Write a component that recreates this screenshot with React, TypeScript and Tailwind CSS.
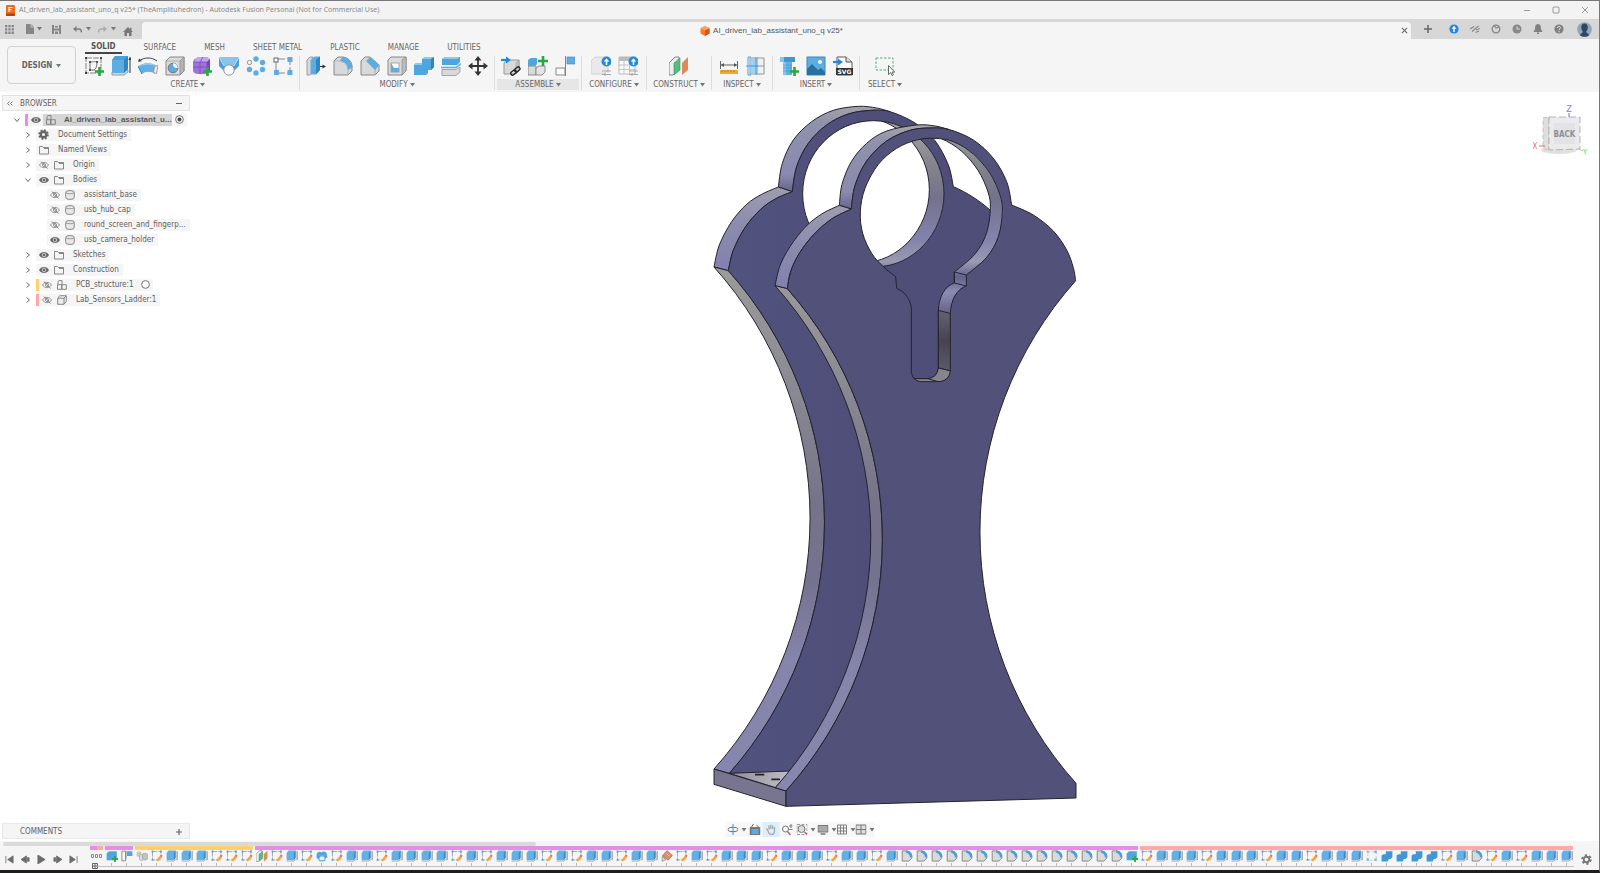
import type { ReactNode } from "react";

type Pt = [number, number];

/* ---------- shared bits ---------- */

const Caret = () => (
  <svg width="5" height="4" viewBox="0 0 5 4" className="shrink-0" aria-hidden="true">
    <path d="M0 0h5L2.5 3.5z" fill="#777" />
  </svg>
);

const Ico = ({ children, className = "size-5" }: { children: ReactNode; className?: string }) => (
  <svg viewBox="0 0 20 20" className={`${className} shrink-0`} fill="none" aria-hidden="true">
    {children}
  </svg>
);

const GreenPlus = () => <path d="M15.500 11v9M11 15.500h9" stroke="#27a844" strokeWidth="2.600" />;

/* ---------- ribbon icons ---------- */

const SketchIcon = () => (
  <Ico>
    <rect x="2" y="2" width="15" height="15" stroke="#777" strokeWidth=".9" strokeDasharray="6 1" />
    <path d="M1 1h2v2H1zM16 1h2v2h-2zM1 16h2v2H1z" fill="#444" />
    <path d="M6 13V7M6 14h5M6 6c3 0 7-1 7 0 0 4-1 7-3 8" stroke="#666" strokeWidth=".9" />
    <path d="M5 5h2v2H5zM12 5h2v2h-2zM5 13h2v2H5z" fill="#555" />
    <GreenPlus />
  </Ico>
);
const ExtrudeIcon = () => (
  <Ico>
    <path d="M1 16v3h12l4-3v-2z" fill="#d9d9d9" stroke="#888" strokeWidth=".8" />
    <path d="M1 4l3-4h13v13l-4 4H1z" fill="#5dade2" />
    <path d="M1 4l3-4h13l-4 4z" fill="#4b9fd8" />
    <path d="M13 4l4-4v13l-4 4z" fill="#2f86c3" />
    <path d="M19 17V3" stroke="#333" strokeWidth="1" />
    <path d="M17.400 4L19 .5 20.600 4z" fill="#333" />
  </Ico>
);
const RevolveIcon = () => (
  <Ico>
    <path d="M1 5c5-4 13-4 18 0" stroke="#444" />
    <path d="M0 6l1-3.500L4 5z" fill="#444" />
    <path d="M0 11c4-5 15-5 20 0l-3 7c-3-3-10-3-13 0z" fill="#62b0e4" />
    <path d="M0 11c4-5 15-5 20 0-5-3-15-3-20 0z" fill="#93ccf0" />
    <path d="M20 9.500l-1.500 8-3-1 1-6z" fill="#eee" stroke="#888" strokeWidth=".7" />
    <path d="M0 10l4 8" stroke="#2f86c3" />
  </Ico>
);
const HoleIcon = () => (
  <Ico>
    <path d="M1 5l4-4h14v14l-4 4H1z" fill="#dcdcdc" stroke="#888" />
    <path d="M15 5l4-4v14l-4 4z" fill="#b5b5b5" stroke="#888" strokeWidth=".7" />
    <path d="M1 5h14" stroke="#999" strokeWidth=".6" />
    <circle cx="8" cy="12" r="4.800" fill="#5dade2" stroke="#777" />
    <path d="M8 7.200a4.800 4.800 0 0 1 4.800 4.800c-4 0-5-2-4.800-4.800z" fill="#f5f5f5" />
  </Ico>
);
const FormIcon = () => (
  <Ico>
    <path d="M1 6c1-4 5-5 9-5s8 0 8 4v8c-1 5-4 5-9 5-7 0-8-1-8-5z" fill="#a070dc" />
    <path d="M4 2.500c4-2 13-2 13.500 1L15 6H2z" fill="#c3a3f0" />
    <path d="M15 6l3-3v11l-3 3z" fill="#7344b4" />
    <path d="M1.500 11h13.500l3-3M8 6v12M8 6l3-5M1.500 6H15v11" stroke="#7a4cb8" strokeWidth=".8" />
    <GreenPlus />
  </Ico>
);
const LoftIcon = () => (
  <Ico>
    <path d="M0 1h20v9l-6 6H6L0 10z" fill="#4b9fd8" />
    <path d="M0 1h20l-5 9H5z" fill="#86c5ee" />
    <path d="M0 1l5 9M20 1l-5 9" stroke="#e5f2fb" strokeWidth=".7" />
    <circle cx="10" cy="14" r="5.200" fill="#fafafa" stroke="#999" />
  </Ico>
);
const CircPatternIcon = () => (
  <Ico>
    <g fill="#5dade2">
      <circle cx="10" cy="3" r="2.700" />
      <circle cx="16.500" cy="6.500" r="2.700" />
      <circle cx="16.500" cy="13.500" r="2.700" />
      <circle cx="10" cy="17" r="2.700" />
      <circle cx="3.500" cy="13.500" r="2.700" />
    </g>
    <circle cx="3.500" cy="6.500" r="2.200" fill="#f5f5f5" stroke="#888" strokeWidth=".9" />
  </Ico>
);
const RectPatternIcon = () => (
  <Ico>
    <path d="M3 3h14v14H3z" stroke="#888" strokeDasharray="9 2" />
    <rect x="1" y="2" width="4" height="4" fill="#fff" stroke="#666" />
    <path d="M14.500 1h5v5h-5zM14.500 14h5v5h-5zM1 14h5v5H1z" fill="#5dade2" />
  </Ico>
);
const PressPullIcon = () => (
  <Ico>
    <path d="M1 4l3-3h3v15l-3 3H1z" fill="#d9d9d9" stroke="#888" strokeWidth=".8" />
    <path d="M4.500 4l4-3.500H14V14l-4 4.500H4.500z" fill="#5dade2" />
    <path d="M10 4l4-3.500V14l-4 4.500z" fill="#2f86c3" />
    <path d="M14 10.500h4" stroke="#333" />
    <path d="M16.500 8.500l3.500 2-3.500 2z" fill="#333" />
  </Ico>
);
const FilletIcon = () => (
  <Ico>
    <path d="M1 5l4-4h5c6 1 9 5 9 10v4l-4 4H1z" fill="#d9d9d9" stroke="#888" />
    <path d="M1 5h5c6 1 8.500 4 9 9v5" stroke="#aaa" strokeWidth=".7" />
    <path d="M9 1c6 0 10.500 4.500 10.500 10.500L15 14c0-5-3-8.500-8-9z" fill="#5dade2" />
  </Ico>
);
const ChamferIcon = () => (
  <Ico>
    <path d="M1 5l4-4h5l9 8v6l-4 4H1z" fill="#d9d9d9" stroke="#888" />
    <path d="M15 13v6" stroke="#999" strokeWidth=".7" />
    <path d="M10.500 1L19.500 9 15 14 6 5z" fill="#5dade2" />
  </Ico>
);
const ShellIcon = () => (
  <Ico>
    <path d="M1 4l3-3h15v14l-4 4H1z" fill="#dcdcdc" stroke="#888" />
    <path d="M15 4l4-3v14l-4 4z" fill="#bdbdbd" stroke="#888" strokeWidth=".7" />
    <rect x="4" y="7" width="8" height="9" fill="#fff" stroke="#888" strokeWidth=".7" />
    <path d="M4 16V7l3 5h5v4z" fill="#5dade2" />
  </Ico>
);
const CombineIcon = () => (
  <Ico>
    <path d="M8 3l3-2h9v10l-3 3h-3v3l-2 2H0V9l2-2h6z" fill="#4fa5dd" />
    <path d="M8 3l3-2h9l-3 2zM0 9l2-2h6v2z" fill="#8ecaf0" />
    <path d="M17 3l3-2v10l-3 3z" fill="#2f86c3" />
  </Ico>
);
const SplitIcon = () => (
  <Ico>
    <path d="M1 3l3-2h15v5l-3 3H1z" fill="#4fa5dd" />
    <path d="M1 3l3-2h15l-3 2z" fill="#8ecaf0" />
    <path d="M0 11.500h15l5-4" stroke="#5dade2" strokeWidth="1.500" />
    <path d="M1 13.500h14l4-2.500v5l-4 3.500H1z" fill="#d9d9d9" stroke="#888" strokeWidth=".7" />
  </Ico>
);
const MoveIcon = () => (
  <Ico>
    <path d="M10 2v16M2 10h16" stroke="#333" strokeWidth="1.800" />
    <path d="M10 0l3.500 4.500h-7zM10 20l3.500-4.500h-7zM0 10l4.500-3.500v7zM20 10l-4.500-3.500v7z" fill="#333" />
  </Ico>
);
const JointLinkIcon = () => (
  <Ico>
    <path d="M3 7l4-3h11v10l-3 4H3z" fill="#d9d9d9" stroke="#999" />
    <path d="M15 7l3-3v10l-3 4z" fill="#c4c4c4" stroke="#999" strokeWidth=".6" />
    <path d="M0 4h6" stroke="#1e88e5" strokeWidth="2.200" />
    <path d="M5 .5L10 4 5 7.500z" fill="#1e88e5" />
    <rect x="9" y="15" width="6" height="3.500" rx="1.700" stroke="#222" strokeWidth="1.300" transform="rotate(-40 12 16)" />
    <rect x="13.500" y="12" width="6" height="3.500" rx="1.700" stroke="#222" strokeWidth="1.300" transform="rotate(-40 16 14)" />
  </Ico>
);
const NewComponentIcon = () => (
  <Ico>
    <path d="M0 10h8v9H0z" fill="#d9d9d9" stroke="#777" strokeWidth=".8" />
    <path d="M8 12l3-2h6v6l-3 3H8z" fill="#e4e4e4" stroke="#777" strokeWidth=".8" />
    <path d="M0 4l3-2h6v6l-2 2H0z" fill="#4fa5dd" />
    <path d="M15 0v10M10 5h10" stroke="#27a844" strokeWidth="2.600" />
  </Ico>
);
const JointFlagIcon = () => (
  <Ico>
    <path d="M1 12h9v7H1z" fill="#fafafa" stroke="#888" />
    <path d="M10.500 0v20" stroke="#e05a5a" />
    <path d="M12 1h8v7h-8z" fill="#5dade2" stroke="#3c87bd" strokeWidth=".6" />
  </Ico>
);
const BlueUp = () => (
  <>
    <circle cx="15.500" cy="5.500" r="5" fill="#1e88e5" />
    <path d="M15.500 9V4" stroke="#fff" strokeWidth="1.600" />
    <path d="M12.700 5.500l2.800-3.200 2.800 3.200z" fill="#fff" />
    <path d="M11 15h9M11 18.500h9M17 13.500v3M14 17v3" stroke="#aaa" />
  </>
);
const ConfigModelIcon = () => (
  <Ico>
    <path d="M0 5l4-4h13v13l-4 4H0z" fill="#e9e9e9" stroke="#d0d0d0" />
    <BlueUp />
  </Ico>
);
const ConfigTableIcon = () => (
  <Ico>
    <path d="M1 1h16v17H1z" fill="#fafafa" stroke="#bbb" />
    <path d="M1 1h16v4H1z" fill="#bbb" />
    <path d="M1 9h16M1 13.500h16M6 5v13M11.500 5v13" stroke="#c4c4c4" />
    <BlueUp />
  </Ico>
);
const PlaneIcon = ({ className }: { className?: string }) => (
  <Ico className={className}>
    <path d="M0 7l6-6h4v13l-6 5H0z" fill="#eee" stroke="#777" strokeWidth=".9" />
    <path d="M5 7l6-5v12l-6 5z" fill="#4fc07f" stroke="#3a9160" strokeWidth=".6" />
    <path d="M13 7l6-6v13l-6 5z" fill="#e08a5c" />
  </Ico>
);
const MeasureIcon = () => (
  <Ico>
    <path d="M1.500 5v8M18.500 5v8M2 9h16" stroke="#555" strokeWidth=".9" />
    <path d="M2 9l3-2v4zM18 9l-3-2v4z" fill="#555" />
    <path d="M1 14h18v4H1z" fill="#f0a830" />
    <path d="M3 14v2M6 14v2M9 14v2M12 14v2M15 14v2" stroke="#a06a10" strokeWidth=".7" />
  </Ico>
);
const InterferenceIcon = () => (
  <Ico>
    <path d="M4 2h14v16H4zM11 2v16M4 10h14" stroke="#888" strokeWidth=".9" fill="#f0f0f0" />
    <path d="M4 3h7v14H4z" fill="#8ec8f0" opacity=".8" />
    <path d="M5 1H2v18h3M10 1v18M0 10h12" stroke="#3a9ae0" strokeWidth=".9" />
  </Ico>
);
const BoltIcon = () => (
  <Ico>
    <path d="M1 1h15v5H1z" fill="#3f97d2" />
    <path d="M4 6h9v13H4z" fill="#62b0e4" />
    <path d="M1 1h4v5H1zM4 6h3v13H4z" fill="#86c5ee" />
    <path d="M4 9h9M4 12h9M4 15h9" stroke="#3f97d2" strokeWidth=".6" />
    <GreenPlus />
  </Ico>
);
const ImageIcon = () => (
  <Ico>
    <path d="M1 1h18v18H1z" fill="#5dade2" stroke="#3c87bd" />
    <circle cx="14" cy="6" r="2" fill="#fff3c0" />
    <path d="M1 19v-6l5-5 6 6 3-2 4 4v3z" fill="#28719f" />
  </Ico>
);
const SvgIcon = () => (
  <svg viewBox="0 0 20 20" className="size-5 shrink-0" fill="none" aria-hidden="true">
    <path d="M4 1h9l6 5v13H4z" fill="#fff" stroke="#555" />
    <path d="M13 1v5h6" fill="#ddd" stroke="#555" />
    <path d="M0 6h6" stroke="#1e88e5" strokeWidth="2.200" />
    <path d="M5 2.500L10 6l-5 3.500z" fill="#1e88e5" />
    <path d="M3 12h17v7H3z" fill="#333" />
    <text x="11.500" y="18" textAnchor="middle" fontSize="6" fontWeight="700" fill="#fff" fontFamily="DejaVu Sans, sans-serif">SVG</text>
  </svg>
);
const SelectIcon = () => (
  <Ico>
    <path d="M1 2h17v12H1z" stroke="#4bb36f" strokeDasharray="2.500 1.500" />
    <path d="M13.500 9.500v9l2.200-1.900 1.400 3 1.300-.7-1.400-2.800h2.800z" fill="#fff" stroke="#444" strokeWidth=".8" />
  </Ico>
);

interface Tool { name: string; icon: ReactNode }
interface Group { label: string; width: string; active?: boolean; tools: Tool[] }

const groups: Group[] = [
  {
    label: "CREATE", width: "w-[219px] pr-1",
    tools: [
      { name: "Create sketch", icon: <SketchIcon /> },
      { name: "Extrude", icon: <ExtrudeIcon /> },
      { name: "Revolve", icon: <RevolveIcon /> },
      { name: "Hole", icon: <HoleIcon /> },
      { name: "Create form", icon: <FormIcon /> },
      { name: "Loft", icon: <LoftIcon /> },
      { name: "Circular pattern", icon: <CircPatternIcon /> },
      { name: "Rectangular pattern", icon: <RectPatternIcon /> },
    ],
  },
  {
    label: "MODIFY", width: "w-[195px]",
    tools: [
      { name: "Press pull", icon: <PressPullIcon /> },
      { name: "Fillet", icon: <FilletIcon /> },
      { name: "Chamfer", icon: <ChamferIcon /> },
      { name: "Shell", icon: <ShellIcon /> },
      { name: "Combine", icon: <CombineIcon /> },
      { name: "Split body", icon: <SplitIcon /> },
      { name: "Move", icon: <MoveIcon /> },
    ],
  },
  {
    label: "ASSEMBLE", width: "w-[87px]", active: true,
    tools: [
      { name: "Insert derive", icon: <JointLinkIcon /> },
      { name: "New component", icon: <NewComponentIcon /> },
      { name: "Joint", icon: <JointFlagIcon /> },
    ],
  },
  {
    label: "CONFIGURE", width: "w-[65px]",
    tools: [
      { name: "Configure model", icon: <ConfigModelIcon /> },
      { name: "Configuration table", icon: <ConfigTableIcon /> },
    ],
  },
  { label: "CONSTRUCT", width: "w-[65px]", tools: [{ name: "Offset plane", icon: <PlaneIcon /> }] },
  {
    label: "INSPECT", width: "w-[61px]",
    tools: [
      { name: "Measure", icon: <MeasureIcon /> },
      { name: "Section", icon: <InterferenceIcon /> },
    ],
  },
  {
    label: "INSERT", width: "w-[87px]",
    tools: [
      { name: "Insert fastener", icon: <BoltIcon /> },
      { name: "Canvas", icon: <ImageIcon /> },
      { name: "Insert SVG", icon: <SvgIcon /> },
    ],
  },
  { label: "SELECT", width: "w-[50px]", tools: [{ name: "Select", icon: <SelectIcon /> }] },
];

const tabs = ["SOLID", "SURFACE", "MESH", "SHEET METAL", "PLASTIC", "MANAGE", "UTILITIES"];

/* ---------- top bars ---------- */

const TitleBar = () => (
  <header className="flex h-[18px] items-center bg-[#f3f3f3] pl-1.5">
    <svg viewBox="0 0 9 11" className="mr-1 h-[11px] w-[9px]" aria-hidden="true">
      <rect width="9" height="11" rx="1" fill="#f26b1d" />
      <path d="M0 8.500h9V11H0z" fill="#b8420a" />
      <path d="M3 7V2.500h3.500M3 4.700h2.500" stroke="#fff" strokeWidth="1.200" fill="none" />
    </svg>
    <h1 className="flex-1 font-['Noto_Sans',sans-serif] text-[7px] leading-3 text-[#8a8a8a]">
      AI_driven_lab_assistant_uno_q v25* (TheAmplituhedron) - Autodesk Fusion Personal (Not for Commercial Use)
    </h1>
    <div className="flex items-center gap-[15px] pr-[7px]">
      <button type="button" aria-label="Minimize" className="flex w-3.5 justify-center">
        <svg viewBox="0 0 8 8" className="size-2"><path d="M1 4.500h6" stroke="#999" /></svg>
      </button>
      <button type="button" aria-label="Maximize" className="flex w-3.5 justify-center">
        <svg viewBox="0 0 8 8" className="size-2"><rect x="1" y="1" width="6" height="6" rx="1" fill="none" stroke="#999" /></svg>
      </button>
      <button type="button" aria-label="Close window" className="flex w-3.5 justify-center">
        <svg viewBox="0 0 8 8" className="size-2"><path d="M1 1l6 6M7 1L1 7" stroke="#999" /></svg>
      </button>
    </div>
  </header>
);

const StatusButton = ({ label, children }: { label: string; children: ReactNode }) => (
  <button type="button" aria-label={label} className="flex w-[21px] justify-center">
    <svg viewBox="0 0 10 10" className="size-2.5" fill="none">{children}</svg>
  </button>
);

const DocumentBar = () => (
  <div className="flex h-5 items-stretch bg-[#d7d7d7]">
    <div className="flex w-[142px] items-center pl-[5px]">
      <button type="button" aria-label="Data panel" className="mr-3">
        <svg viewBox="0 0 9 9" className="size-[9px]" fill="#868686">
          <path d="M0 0h2.300v2.300H0zM3.300 0h2.300v2.300H3.300zM6.600 0h2.300v2.300H6.600zM0 3.300h2.300v2.300H0zM3.300 3.300h2.300v2.300H3.300zM6.600 3.300h2.300v2.300H6.600zM0 6.600h2.300v2.300H0zM3.300 6.600h2.300v2.300H3.300zM6.600 6.600h2.300v2.300H6.600z" />
        </svg>
      </button>
      <button type="button" aria-label="File" className="mr-2.5 flex items-center gap-[3px]">
        <svg viewBox="0 0 8 10" className="h-2.5 w-2"><path d="M0 0h5l3 3v7H0z" fill="#868686" /><path d="M5 0v3h3" stroke="#d7d7d7" fill="none" strokeWidth=".8" /></svg>
        <Caret />
      </button>
      <button type="button" aria-label="Save" className="mr-3">
        <svg viewBox="0 0 9 9" className="size-[9px]"><path d="M0 0h9v9H0z" fill="#868686" /><path d="M2 0h5v3.500H2zM2 5.500h5V9H2z" fill="#d7d7d7" /><path d="M3 1h3v1.500H3zM3 6.500h3V9H3z" fill="#868686" /></svg>
      </button>
      <button type="button" aria-label="Undo" className="mr-[7px] flex items-center gap-1">
        <svg viewBox="0 0 9 7" className="h-[7px] w-[9px]"><path d="M2 3h4c2 0 2.500 2 2.500 3.500" stroke="#7c7c7c" strokeWidth="1.400" fill="none" /><path d="M0 3L3.500 0v6z" fill="#7c7c7c" /></svg>
        <Caret />
      </button>
      <button type="button" aria-label="Redo" className="mr-[7px] flex items-center gap-1">
        <svg viewBox="0 0 9 7" className="h-[7px] w-[9px]"><path d="M7 3H3C1 3 .5 5 .5 6.500" stroke="#aaa" strokeWidth="1.400" fill="none" /><path d="M9 3L5.500 0v6z" fill="#aaa" /></svg>
        <Caret />
      </button>
      <button type="button" aria-label="Home" className="pt-1">
        <svg viewBox="0 0 10 9" className="h-[9px] w-2.5"><path d="M5 0L0 5h1.500v4h2.500V6h2v3h2.500V5H10L8.500 3.500V.8H7v1.200z" fill="#777" /></svg>
      </button>
    </div>
    <div className="mt-[3px] flex flex-1 items-center rounded-t-sm bg-[#f5f5f5]">
      <div className="flex flex-1 items-center justify-center gap-[3px] pl-1">
        <svg viewBox="0 0 10 10" className="size-2.5" aria-hidden="true">
          <path d="M5 0l4.500 2.200v5.300L5 10 .5 7.500V2.200z" fill="#f47b30" />
          <path d="M5 0l4.500 2.200L5 4.500.5 2.200z" fill="#f9a465" />
          <path d="M9.500 2.200v5.300L5 10V4.500z" fill="#d9540f" />
        </svg>
        <span className="font-['Liberation_Sans',sans-serif] text-[8px] leading-3 text-[#555]">AI_driven_lab_assistant_uno_q v25*</span>
      </div>
      <button type="button" aria-label="Close document" className="flex w-3.5 justify-center">
        <svg viewBox="0 0 8 8" className="size-[7px]"><path d="M1 1l6 6M7 1L1 7" stroke="#666" strokeWidth="1.200" /></svg>
      </button>
    </div>
    <div className="flex items-center pl-1.5">
      <button type="button" aria-label="New document" className="mr-[5px] flex w-[21px] justify-center">
        <svg viewBox="0 0 8 8" className="size-2"><path d="M4 0v8M0 4h8" stroke="#666" strokeWidth="1.500" /></svg>
      </button>
      <StatusButton label="Updates"><circle cx="5" cy="5" r="4.600" fill="#1e88e5" /><path d="M5 8V4" stroke="#fff" strokeWidth="1.500" /><path d="M2.600 4.800L5 1.800l2.400 3z" fill="#fff" /></StatusButton>
      <StatusButton label="Offline"><path d="M0 5l4-2.500M2 7.500L8.500 2M6 6l4-1.500M5.500 8.500L9 7" stroke="#888" strokeWidth="1.100" /></StatusButton>
      <StatusButton label="Extensions"><circle cx="5" cy="5" r="3.800" stroke="#888" strokeWidth="1.400" /><path d="M3 1l2 3 3-1" stroke="#888" strokeWidth="1.200" /></StatusButton>
      <StatusButton label="Job status"><circle cx="5" cy="5" r="4.500" fill="#888" /><path d="M5 2.500V5h3" stroke="#d7d7d7" strokeWidth="1.100" /></StatusButton>
      <StatusButton label="Notifications"><path d="M5 0c2.500.5 3 2 3 5l1.500 3h-9L2 5c0-3 .5-4.500 3-5zM4 8.500h2V10H4z" fill="#808080" /></StatusButton>
      <StatusButton label="Help"><circle cx="5" cy="5" r="4.600" fill="#808080" /><path d="M3.500 4c0-2 3-2 3-.2 0 1-1.500 1-1.500 2.200M5 7v1.200" stroke="#ececec" /></StatusButton>
      <button type="button" aria-label="Account" className="ml-2 mr-[7px]">
        <svg viewBox="0 0 16 16" className="size-[15px]">
          <circle cx="8" cy="8" r="7.800" fill="#8ea6c0" />
          <path d="M4.500 5.500C4.500 3 6 1.500 8 1.500s3.500 1.500 3.500 4S10 10 9.700 10.500c0 1.500 2.300 1.500 3.300 3.500-3 2.300-7 2.300-10 0 1-2 3.300-2 3.300-3.500-.3-.5-1.800-2.500-1.800-5z" fill="#33475e" />
        </svg>
      </button>
    </div>
  </div>
);

const Ribbon = () => (
  <div className="flex h-[53px] bg-[#f5f5f5]">
    <button type="button" className="ml-[7px] mt-[7px] flex h-[38px] w-[69px] items-center justify-center gap-1 rounded-sm border border-[#d2d2d2] pt-px text-[8px] font-bold text-[#666]">
      DESIGN <Caret />
    </button>
    <div className="ml-[5px] flex flex-col">
      <nav className="flex h-[15px] gap-4 pl-1">
        {tabs.map((t, i) => (
          <button
            key={t}
            type="button"
            className={`px-1.5 pt-[2px] text-[8px] leading-2 ${i === 0 ? "border-b-2 border-[#444] font-bold text-[#555]" : "text-[#666]"}`}
          >
            {t}
          </button>
        ))}
      </nav>
      <div className="flex pt-0.5">
        {groups.map((g, i) => (
          <div key={g.label} className={`${g.width} ${i < groups.length - 1 ? "border-r border-[#dcdcdc]" : ""} flex h-[34px] flex-col items-center`}>
            <div className="flex h-5 gap-[7px]">
              {g.tools.map((t) => (
                <button key={t.name} type="button" aria-label={t.name} className="size-5">{t.icon}</button>
              ))}
            </div>
            <button
              type="button"
              className={`mt-[3px] flex items-center justify-center gap-0.5 whitespace-nowrap text-[8px] leading-[11px] text-[#666] ${g.active ? "w-[82px] bg-[#e6e6e6]" : ""}`}
            >
              {g.label} <Caret />
            </button>
          </div>
        ))}
      </div>
    </div>
  </div>
);

/* ---------- browser tree ---------- */

const Eye = ({ off = false }: { off?: boolean }) => (
  <svg viewBox="0 0 10 8" className="h-2 w-2.5" fill="none" aria-hidden="true">
    {off ? (
      <>
        <path d="M.5 4C2.500.5 7.500.5 9.500 4 7.500 7.500 2.500 7.500.5 4z" stroke="#808080" strokeWidth=".8" />
        <circle cx="5" cy="4" r="1.600" stroke="#808080" strokeWidth=".8" />
        <path d="M2 .5l6.500 7" stroke="#777" strokeWidth=".9" />
      </>
    ) : (
      <>
        <path d="M0 4C2 0 8 0 10 4 8 8 2 8 0 4z" fill="#666" />
        <circle cx="5" cy="4" r="1.800" stroke="#f5f5f5" strokeWidth=".7" />
      </>
    )}
  </svg>
);

type Kind = "folder" | "gear" | "body" | "assembly" | "part";

const TreeIcon = ({ kind }: { kind: Kind }) => {
  if (kind === "gear")
    return (
      <svg viewBox="0 0 24 24" className="size-[11px]" fill="none" aria-hidden="true">
        <circle cx="12" cy="12" r="6" stroke="#666" strokeWidth="5" />
        <circle cx="12" cy="12" r="9.500" stroke="#666" strokeWidth="4" strokeDasharray="4 3.460" />
      </svg>
    );
  return (
    <svg viewBox="0 0 10 10" className="size-2.5" fill="none" stroke="#7c7c7c" strokeWidth=".9" aria-hidden="true">
      {kind === "folder" && <path d="M.5 9V1.500h3l.8 1h5.200V9zM5 3.500l4.500 0" />}
      {kind === "body" && (
        <>
          <rect x=".7" y=".7" width="8.600" height="8.600" rx="2.500" fill="#e8e8e8" />
          <path d="M1 3c2 1 6 1 8 0" strokeWidth=".7" />
        </>
      )}
      {kind === "assembly" && <path d="M.5 4.700h4.300v4.600H.5zM4.800 4.700h4.500v4.600H4.800zM1 4.500V1.500L2 .6h3v4" />}
      {kind === "part" && <path d="M.7 3.500l2-2.800h6.600v5.800L7 9.300H.7zM7 9V3M1 3.200h6l2-2.200" fill="#ededed" />}
    </svg>
  );
};

interface Node { label: string; level: 0 | 1 | 2; kind: Kind; open?: boolean; eye?: "on" | "off"; bar?: string; radio?: "on" | "off" }

const nodes: Node[] = [
  { label: "AI_driven_lab_assistant_u...", level: 0, kind: "assembly", open: true, eye: "on", bar: "bg-[#e58ee8]", radio: "on" },
  { label: "Document Settings", level: 1, kind: "gear" },
  { label: "Named Views", level: 1, kind: "folder" },
  { label: "Origin", level: 1, kind: "folder", eye: "off" },
  { label: "Bodies", level: 1, kind: "folder", open: true, eye: "on" },
  { label: "assistant_base", level: 2, kind: "body", eye: "off" },
  { label: "usb_hub_cap", level: 2, kind: "body", eye: "off" },
  { label: "round_screen_and_fingerp...", level: 2, kind: "body", eye: "off" },
  { label: "usb_camera_holder", level: 2, kind: "body", eye: "on" },
  { label: "Sketches", level: 1, kind: "folder", eye: "on" },
  { label: "Construction", level: 1, kind: "folder", eye: "on" },
  { label: "PCB_structure:1", level: 1, kind: "assembly", eye: "off", bar: "bg-[#ffd06b]", radio: "off" },
  { label: "Lab_Sensors_Ladder:1", level: 1, kind: "part", eye: "off", bar: "bg-[#ffa8ab]" },
];

const indent = { 0: "pl-[9px]", 1: "pl-5", 2: "pl-[47px]" };

const TreeRow = ({ node }: { node: Node }) => {
  const root = node.level === 0;
  return (
    <li className={`flex h-[15px] items-center ${indent[node.level]}`}>
      {node.level < 2 && (
        <button type="button" aria-label={`Toggle ${node.label}`} className="mr-px flex w-[15px] shrink-0 justify-center">
          <svg viewBox="0 0 6 6" className="size-1.5" fill="none" stroke="#666">
            <path d={node.open ? "M.5 1.500L3 4.500l2.500-3" : "M1.500.5L4.500 3l-3 2.500"} />
          </svg>
        </button>
      )}
      {node.bar && <span className={`h-3 w-[3px] shrink-0 ${node.bar}`} />}
      <div className="flex h-3 items-center bg-[#f5f5f5]">
        {node.eye && (
          <button type="button" aria-label={`Visibility of ${node.label}`} className="flex w-[15px] shrink-0 justify-center">
            <Eye off={node.eye === "off"} />
          </button>
        )}
        <div className={`flex h-3 items-center ${root ? "w-[129px] bg-[#d6d6d6]" : ""}`}>
          <span className="flex w-[15px] shrink-0 justify-center"><TreeIcon kind={node.kind} /></span>
          <span className={`whitespace-nowrap text-[8px] leading-3 ${root ? "pl-1.5 font-['Liberation_Sans',sans-serif] font-bold text-[#5a5a5a]" : "pl-[7px] pr-1 text-[#5f5f5f]"}`}>{node.label}</span>
        </div>
        {node.radio && (
          <button type="button" aria-label={`Activate ${node.label}`} className="flex w-[15px] shrink-0 justify-center">
            <svg viewBox="0 0 10 10" className="size-[9px]" fill="none">
              <circle cx="5" cy="5" r="4.300" stroke="#555" strokeWidth=".9" fill="#fafafa" />
              {node.radio === "on" && <circle cx="5" cy="5" r="2.200" fill="#444" />}
            </svg>
          </button>
        )}
      </div>
    </li>
  );
};

const Sidebar = () => (
  <aside className="flex w-[190px] flex-col justify-between pb-0.5 pl-0.5 pt-[3px]">
    <section>
      <div className="flex h-4 items-center border border-[#e2e2e2] bg-[#f5f5f5] pl-1 pt-px text-[#5f5f5f]">
        <svg viewBox="0 0 6 5" className="mr-[7px] h-[5px] w-1.5" fill="none" stroke="#777"><path d="M2.500.5l-2 2 2 2M5.500.5l-2 2 2 2" /></svg>
        <h2 className="flex-1 text-[8px]">BROWSER</h2>
        <button type="button" aria-label="Collapse browser" className="mr-[7px]">
          <svg viewBox="0 0 6 6" className="size-1.5"><path d="M0 2.500h6" stroke="#666" /></svg>
        </button>
      </div>
      <ul className="-ml-0.5 mt-px">
        {nodes.map((n) => <TreeRow key={n.label} node={n} />)}
      </ul>
    </section>
    <section className="flex h-4 items-center border border-[#e8e8e8] bg-[#f5f5f5] pl-[17px] pt-px">
      <h2 className="flex-1 text-[8px] text-[#5f5f5f]">COMMENTS</h2>
      <button type="button" aria-label="Add comment" className="mr-[7px]">
        <svg viewBox="0 0 6 6" className="size-1.5"><path d="M0 3h6M3 0v6" stroke="#666" strokeWidth="1.200" /></svg>
      </button>
    </section>
  </aside>
);

/* ---------- model ---------- */

// Catmull-Rom spline through the points, written as the tail of an SVG path.
const curve = (p: Pt[]) =>
  p.slice(0, -1).map((a, i) => {
    const b = p[i + 1];
    const z = p[i - 1] ?? a;
    const c = p[i + 2] ?? b;
    return `C${a[0] + (b[0] - z[0]) / 6},${a[1] + (b[1] - z[1]) / 6} ${b[0] - (c[0] - a[0]) / 6},${b[1] - (c[1] - a[1]) / 6} ${b[0]},${b[1]}`;
  }).join("");
const from = (p: Pt[]) => `M${p[0][0]},${p[0][1]}${curve(p)}`;
const line = (p: Pt[]) => `L${p[0][0]},${p[0][1]}${curve(p)}`;
const back = (p: Pt[]) => [...p].reverse();

const backRearShoulder: Pt[] = [[72, 516], [88, 450], [125, 380], [170, 328], [215, 298], [265, 276]];
const backRearRing: Pt[] = [[265, 276], [277, 205], [310, 135], [365, 80], [430, 46], [505, 34], [560, 39], [600, 50]];
const backFaceShoulder: Pt[] = [[115, 527], [130, 466], [165, 398], [212, 343], [258, 311], [307, 290]];
const backFaceRing: Pt[] = [[307, 290], [320, 215], [355, 145], [410, 90], [475, 57], [545, 46], [600, 50], [675, 84], [735, 137], [775, 210], [790, 275]];

const frontRearShoulder: Pt[] = [[255, 572], [270, 512], [300, 455], [345, 397], [395, 357], [448, 331]];
const frontRearRing: Pt[] = [[448, 331], [456, 268], [484, 200], [530, 145], [590, 108], [680, 90], [735, 93], [775, 103]];
const frontFaceShoulder: Pt[] = [[292, 581], [302, 530], [328, 475], [372, 418], [425, 372], [484, 342]];
const frontFaceRing: Pt[] = [[484, 342], [495, 272], [530, 198], [590, 138], [660, 106], [720, 99], [775, 103], [850, 135], [910, 190], [950, 260], [965, 330]];
const frontRightShoulder: Pt[] = [[965, 330], [1030, 360], [1090, 408], [1130, 465], [1150, 518], [1157, 557]];

const backHole = "M550,77 C667,77 762,175 762,296 C762,417 667,515 560,515 C433,515 338,417 338,296 C338,175 433,77 550,77Z";
const backRim = "M506,66 C623,66 718,164 718,284 C718,404 623,503 516,503 C389,503 294,404 294,284 C294,164 389,66 506,66Z";
const frontHoleArc: Pt[] = [[829, 540], [890, 487], [925, 425], [937, 350], [930, 300], [900, 235], [850, 177], [790, 140], [735, 130], [680, 135], [620, 160], [565, 208], [525, 280], [511, 350], [518, 415], [545, 475], [580, 515], [617, 545]];
const frontHole = `${from(frontHoleArc)}L620,580C645,590 662,615 664,640L664,832Q668,857 692,860L750,860Q778,856 781,828L781,655C783,615 800,582 829,573Z`;
const frontRim = `${from(frontHoleArc.map(([x, y]): Pt => [x - 36, y - 9]))}L584,571C609,581 626,606 628,631L628,823Q632,848 656,851L714,851Q742,847 745,819L745,646C747,606 764,573 793,564Z`;

const Model = () => (
  <svg viewBox="60 27 1110 2118" className="h-[706px] w-[370px]" role="img" aria-label="usb_camera_holder" stroke="#23232f" strokeWidth="3" strokeLinejoin="round">
    <defs>
      <linearGradient id="rim" x1="0" y1="30" x2="0" y2="290" gradientUnits="userSpaceOnUse">
        <stop offset="0" stopColor="#a5a5a8" />
        <stop offset=".2" stopColor="#9091ac" />
        <stop offset=".8" stopColor="#8a8ab0" />
        <stop offset="1" stopColor="#65648a" />
      </linearGradient>
      <linearGradient id="frontRing" x1="0" y1="90" x2="0" y2="342" gradientUnits="userSpaceOnUse">
        <stop offset="0" stopColor="#a5a5a8" />
        <stop offset=".2" stopColor="#9091ac" />
        <stop offset=".8" stopColor="#8a8ab0" />
        <stop offset="1" stopColor="#65648a" />
      </linearGradient>
      <linearGradient id="shoulder" x1="0" y1="0" x2="0" y2="1">
        <stop offset="0" stopColor="#9d9db0" />
        <stop offset=".5" stopColor="#8a8aae" />
        <stop offset="1" stopColor="#8281b0" />
      </linearGradient>
      <linearGradient id="bore" x1="0" y1="90" x2="0" y2="660" gradientUnits="userSpaceOnUse">
        <stop offset="0" stopColor="#a3a3a5" />
        <stop offset=".2" stopColor="#85858d" />
        <stop offset=".38" stopColor="#73728c" />
        <stop offset=".6" stopColor="#8382ac" />
        <stop offset=".72" stopColor="#9a9ab2" />
        <stop offset=".8" stopColor="#62618a" />
        <stop offset=".88" stopColor="#8c8cb4" />
        <stop offset="1" stopColor="#615f80" />
      </linearGradient>
      <linearGradient id="edge" x1="0" y1="516" x2="0" y2="2090" gradientUnits="userSpaceOnUse">
        <stop offset="0" stopColor="#9b9b9b" />
        <stop offset=".2" stopColor="#8c8c94" />
        <stop offset=".45" stopColor="#757389" />
        <stop offset=".6" stopColor="#74738f" />
        <stop offset=".75" stopColor="#8584aa" />
        <stop offset="1" stopColor="#8786ae" />
      </linearGradient>
      <linearGradient id="slot" x1="0" y1="650" x2="0" y2="825" gradientUnits="userSpaceOnUse">
        <stop offset="0" stopColor="#62616f" />
        <stop offset=".5" stopColor="#45444f" />
        <stop offset="1" stopColor="#5a5967" />
      </linearGradient>
      <linearGradient id="inside" x1="115" y1="0" x2="540" y2="0" gradientUnits="userSpaceOnUse">
        <stop offset="0" stopColor="#52527f" />
        <stop offset="1" stopColor="#4e4e78" />
      </linearGradient>
      <linearGradient id="floor" x1="120" y1="2030" x2="290" y2="2060" gradientUnits="userSpaceOnUse">
        <stop offset="0" stopColor="#8d8d96" />
        <stop offset="1" stopColor="#bcbcc4" />
      </linearGradient>
      <clipPath id="backHole"><path d={backHole} /></clipPath>
      <clipPath id="frontHole"><path d={frontHole} /></clipPath>
    </defs>

    {/* rear plate */}
    <g clipPath="url(#backHole)">
      <path d={`M200,20H900V620H200Z${backRim}`} fillRule="evenodd" fill="url(#bore)" />
    </g>
    <path d={`${from(backRearRing)}${curve(back(backFaceRing.slice(0, 7)))}Z`} fill="url(#rim)" />
    <path d={`${from(backRearShoulder)}L307,290${curve(back(backFaceShoulder))}Z`} fill="url(#shoulder)" />
    <path d="M72,516A1128,1128 0 0 1 72,2022L118,2035A1134,1134 0 0 0 115,527Z" fill="url(#edge)" />
    <path
      d={`${from(backFaceShoulder)}${curve(backFaceRing)}C830,292 870,318 900,345L1000,440L860,1100L700,1300L560,2028L118,2035A1134,1134 0 0 0 115,527Z${backHole}`}
      fillRule="evenodd"
      fill="url(#inside)"
    />

    {/* base */}
    <path d="M118,2035L300,2028L256,2078Z" fill="url(#floor)" />
    <path d="M195,2039h28M244,2053h26" strokeWidth="5" />
    <path d="M72,2022L288,2088L288,2134L72,2068Z" fill="#77758f" />

    {/* front plate */}
    <g clipPath="url(#frontHole)">
      <path d={`M450,60H1000V900H450Z${frontRim}`} fillRule="evenodd" fill="url(#bore)" />
      <path d="M745,646L783,656V828L745,819Z" fill="url(#slot)" />
      <path d="M745,819L783,828V870H600V851H714Q742,847 745,819Z" fill="#85858d" />
      <path d="M793,531L829,540M793,531V564L829,573M714,851L750,862" fill="none" />
    </g>
    <path d={`${from(frontRearRing)}${curve(back(frontFaceRing.slice(0, 7)))}Z`} fill="url(#frontRing)" />
    <path d={`${from(frontRearShoulder)}L484,342${curve(back(frontFaceShoulder))}Z`} fill="url(#shoulder)" />
    <path d="M255,572A1132,1132 0 0 1 256,2078L288,2088A1132,1132 0 0 0 292,581Z" fill="url(#edge)" />
    <path
      d={`${from(frontFaceShoulder)}${curve(frontFaceRing)}${line(frontRightShoulder)}A1132,1132 0 0 0 1158,2065L1158,2109L288,2134L288,2088A1132,1132 0 0 0 292,581Z${frontHole}`}
      fillRule="evenodd"
      fill="#52517a"
    />
  </svg>
);

const ViewCube = () => (
  <svg viewBox="0 0 60 54" className="h-[54px] w-[60px]" role="img" aria-label="View cube: back" fontFamily="DejaVu Sans Condensed, sans-serif">
    <ellipse cx="28" cy="45" rx="18" ry="4" fill="#000" opacity=".12" />
    <path d="M12 13l6-1v34l-6-3z" fill="#dedede" stroke="#b5b5b5" strokeWidth=".8" strokeDasharray="4 3" />
    <path d="M18 12h31v32l-31 1z" fill="#ebebeb" stroke="#a5a5a5" strokeWidth=".8" strokeDasharray="7 3" />
    <path d="M23 18h21v21H23z" fill="#e2e3e6" />
    <text x="33.500" y="32" textAnchor="middle" fontSize="8" fontWeight="700" fill="#8f9198">BACK</text>
    <path d="M38 8v4" stroke="#6a6af0" />
    <text x="38" y="7" textAnchor="middle" fontSize="9" fill="#7a7af5">Z</text>
    <path d="M8 41h6" stroke="#f26a6a" />
    <text x="4" y="44" textAnchor="middle" fontSize="8" fill="#f26a6a">X</text>
    <path d="M48 44l4 2" stroke="#7be87b" />
    <text x="54" y="49" textAnchor="middle" fontSize="7" fontWeight="700" fill="#86ef86">Y</text>
  </svg>
);

const navTools: { name: string; width: string; caret?: boolean; active?: boolean; icon: ReactNode }[] = [
  { name: "Orbit", width: "w-[23px]", caret: true, icon: <><ellipse cx="5.500" cy="5.500" rx="5" ry="2.200" stroke="#666" /><path d="M5.500 0v11" stroke="#3a9ae0" /></> },
  { name: "Look at", width: "w-[14px]", icon: <><path d="M0 3h11v8H0z" fill="#777" /><path d="M2 5h7v5H2z" fill="#5dade2" /><path d="M2 3l2-3M9 3L7 1" stroke="#666" /></> },
  { name: "Pan", width: "w-[17px]", active: true, icon: <path d="M2.500 6.500L.8 4.500M3.500 5.500V1.500M5.300 5V.8M7.200 5V1.500M9 6V3M2.500 6.500c.5 3 1.500 4 3.500 4s3-1.500 3-4.500" stroke="#a5a5a5" strokeWidth="1.300" /> },
  { name: "Zoom", width: "w-[16px]", icon: <><circle cx="4" cy="5" r="3" stroke="#777" /><path d="M6 7.500L9 11" stroke="#a66" strokeWidth="1.400" /><path d="M9.500 0v4M7.500 2h4M7.500 5.500h4" stroke="#666" strokeWidth=".8" /></> },
  { name: "Fit", width: "w-[22px]", caret: true, icon: <><path d="M.5.5h10v10H.5z" stroke="#999" strokeDasharray="3 1.500" /><circle cx="5" cy="5" r="3.500" fill="#ddd" stroke="#777" /><path d="M8 8l2.500 2.500" stroke="#a66" strokeWidth="1.300" /></> },
  { name: "Display", width: "w-[19px]", caret: true, icon: <><path d="M.5 1.500h10v6.500H.5z" fill="#aaa" stroke="#777" /><path d="M3 10h5" stroke="#777" strokeWidth="1.400" /></> },
  { name: "Grid", width: "w-[19px]", caret: true, icon: <path d="M1 1h9v9H1zM4 1v9M7 1v9M1 4h9M1 7h9" stroke="#777" strokeWidth=".9" /> },
  { name: "Viewports", width: "w-[19px]", caret: true, icon: <><path d="M.5 1h10v9H.5z" fill="#ddd" stroke="#777" /><path d="M5.500 1v9M.5 5.500h10" stroke="#777" /></> },
];

const Viewport = () => (
  <main className="flex flex-1 justify-center bg-white pt-3">
    <Model />
  </main>
);

/* ---------- timeline ---------- */

const small = "size-3";

const featureIcons: Record<string, ReactNode> = {
  e: (
    <Ico className={small}>
      <path d="M1 5l3-4h12v12l-3 4H1z" fill="#62b0e6" />
      <path d="M13 5l3-4v12l-3 4z" fill="#3c8cc6" />
      <path d="M1 18.500h12l4-3" stroke="#aaa" strokeWidth="1.500" />
      <path d="M18.500 2v15" stroke="#777" strokeWidth="1.500" />
    </Ico>
  ),
  s: (
    <Ico className={small}>
      <path d="M2.500 2.500h14v14h-14z" stroke="#9a9a9a" strokeWidth="1.300" strokeDasharray="8 1.500" />
      <path d="M1 1h3v3H1zM15 1h3v3h-3zM1 15h3v3H1z" fill="#5b9fd0" />
      <path d="M10 18l6-7" stroke="#f5a623" strokeWidth="3.500" />
      <path d="M16 11l2-2.500" stroke="#ee6b5b" strokeWidth="3.500" />
    </Ico>
  ),
  f: (
    <Ico className={small}>
      <path d="M2 1.500h8c5 1 8 5 8 9v3l-5 5H2z" fill="#dadada" stroke="#808080" strokeWidth="1.500" />
      <path d="M9 1c6 0 10 5 10 10l-4 2c0-5-3-8-7-9z" fill="#4d9fd8" />
    </Ico>
  ),
  n: (
    <Ico className={small}>
      <path d="M1 6l4-4h13v10l-4 5H1z" fill="#4fa5dd" />
      <path d="M15 10v10M10 15h10" stroke="#27a844" strokeWidth="3" />
    </Ico>
  ),
  j: (
    <Ico className={small}>
      <path d="M1.500 2h6v16h-6z" fill="#fafafa" stroke="#777" strokeWidth="1.400" />
      <path d="M9 1v14" stroke="#999" />
      <path d="M10 2h9v8h-9z" fill="#4fa5dd" />
    </Ico>
  ),
  y: (
    <Ico className={small}>
      <path d="M1 4c0-2 8-2 8 0v6c0 2-8 2-8 0z" fill="#c9c9c9" />
      <path d="M6 9c0-2 6-2 6 0v7c0 2-6 2-6 0z" fill="#dcdcdc" stroke="#999" />
      <path d="M11 7c0-2 8-2 8 0v8c0 2-8 2-8 0z" fill="#c4c4c4" stroke="#999" />
    </Ico>
  ),
  p: <PlaneIcon className={small} />,
  c: (
    <Ico className={small}>
      <path d="M1 8c0-5 6-6 8-4 2-3 9-2 9 3l1 6h-5V9H6v5H1z" fill="#4fa5dd" />
      <rect x="5" y="10" width="10" height="8" rx="2" fill="#eee" stroke="#2f86c3" strokeWidth="1.500" />
    </Ico>
  ),
  t: (
    <Ico className={small}>
      <path d="M2 10l8-9 9 8-7 8z" fill="#d98f68" stroke="#9a6a50" />
      <path d="M2 11l6 5-6 3z" fill="#ddd" stroke="#777" />
      <path d="M9 6l5 4" stroke="#f0cdb8" strokeWidth="1.500" />
    </Ico>
  ),
  r: (
    <Ico className={small}>
      <path d="M3 3h14v14H3z" stroke="#9bb7ca" strokeDasharray="4 3" />
      <path d="M1 14h4v4H1zM14 1h4v4h-4zM14 14h4v4h-4z" fill="#6fb6e6" />
      <path d="M1 1h4v4H1z" fill="#bbb" />
    </Ico>
  ),
  b: (
    <Ico className={small}>
      <path d="M8 2h11v10l-3 3h-3l-2 4H1V9l3-2h4z" fill="#4296d4" />
    </Ico>
  ),
};

const segments = [
  { bar: "bg-[#e58ee8]", items: "nj" },
  { bar: "bg-[#ffd06b]", items: "yseeesss" },
  { bar: "bg-[#e58ee8]", items: "psescseeseeeesesee" + "esesee" + "seetseseeeseeeseese" + "fffffffffffffffn" },
  { bar: "bg-[#ffaaaa]", items: "seeeseeeseeseeerbbbbsefsesee" + "e" },
];

const playback = [
  { name: "Go to start", d: "M1 1v8M9 1L3 5l6 4z" },
  { name: "Step back", d: "M6 1L0 5l6 4zM7 3v4h2V3z" },
  { name: "Play", d: "M1 0l8 5-8 5z" },
  { name: "Step forward", d: "M4 1l6 4-6 4zM1 3v4h2V3z" },
  { name: "Go to end", d: "M9 1v8M1 1l6 4-6 4z" },
];

const Timeline = () => (
  <footer className="bg-[#f5f5f5] pt-px">
    <div className="ml-[3px] h-1 w-1/3 rounded-full bg-[#dadada]" />
    <div className="flex h-6 items-stretch">
      <div className="flex w-[89px] shrink-0 items-center gap-[7px] pl-[5px] pt-0.5">
        {playback.map((p) => (
          <button key={p.name} type="button" aria-label={p.name}>
            <svg viewBox="0 0 10 10" className="size-[9px]" fill="#6c6c6c" stroke="#6c6c6c" strokeWidth=".9"><path d={p.d} /></svg>
          </button>
        ))}
      </div>
      <div className="flex min-w-0 flex-1 overflow-hidden">
        <div className="w-[15px] shrink-0">
          <div className="mx-px flex h-1"><span className="flex-1 bg-[#e58ee8]" /><span className="flex-1 bg-[#ffaaaa]" /></div>
          <svg viewBox="0 0 15 20" className="h-5 w-[15px]" fill="none" stroke="#888">
            <path d="M2.500 4.500h2v3h-2zM6.500 4.500h2v3h-2zM10.500 4.500h2v3h-2z" />
            <path d="M3.500 13.500h5v5h-5z" stroke="#666" />
            <path d="M8.500 16.500h7" stroke="#c2c2c2" />
            <path d="M6 14v4M4 16h4" stroke="#666" />
          </svg>
        </div>
        {segments.map((seg, i) => (
          <div key={i} className="shrink-0">
            <div className={`mx-px h-1 ${seg.bar}`} />
            <div className="flex border-b border-[#c2c2c2]">
              {[...seg.items].map((k, j) => (
                <button key={j} type="button" aria-label={`Feature ${j + 1}`} className="flex h-4 w-[15px] flex-col items-center">
                  {featureIcons[k]}
                  <span className="mt-px h-[3px] w-px bg-[#bbb]" />
                </button>
              ))}
            </div>
          </div>
        ))}
      </div>
      <button type="button" aria-label="Timeline settings" className="mr-1.5 flex w-3 shrink-0 items-center pt-0.5">
        <svg viewBox="0 0 24 24" className="size-[11px]" fill="none">
          <circle cx="12" cy="12" r="6" stroke="#777" strokeWidth="4" />
          <circle cx="12" cy="12" r="9.500" stroke="#777" strokeWidth="4" strokeDasharray="5 4.950" />
        </svg>
      </button>
    </div>
  </footer>
);

export default function App() {
  return (
    <div className="flex min-h-screen flex-col border-b-[3px] border-r border-t border-b-[#1f1c1e] border-r-[#777] border-t-[#777] bg-white font-['DejaVu_Sans_Condensed','DejaVu_Sans',sans-serif]">
      <TitleBar />
      <DocumentBar />
      <Ribbon />
      <div className="relative flex flex-1">
        <Sidebar />
        <Viewport />
        <div className="absolute right-2 top-[13px]"><ViewCube /></div>
        <div className="absolute bottom-1 left-1/2 flex h-[15px] -translate-x-1/2 bg-[#f7f7f7]">
          {navTools.map((n) => (
            <button key={n.name} type="button" aria-label={n.name} className={`flex items-center justify-center gap-[3px] ${n.width} ${n.active ? "bg-[#dceffa]" : ""}`}>
              <svg viewBox="0 0 11 11" className="size-[11px] shrink-0" fill="none">{n.icon}</svg>
              {n.caret && <Caret />}
            </button>
          ))}
        </div>
      </div>
      <Timeline />
    </div>
  );
}
